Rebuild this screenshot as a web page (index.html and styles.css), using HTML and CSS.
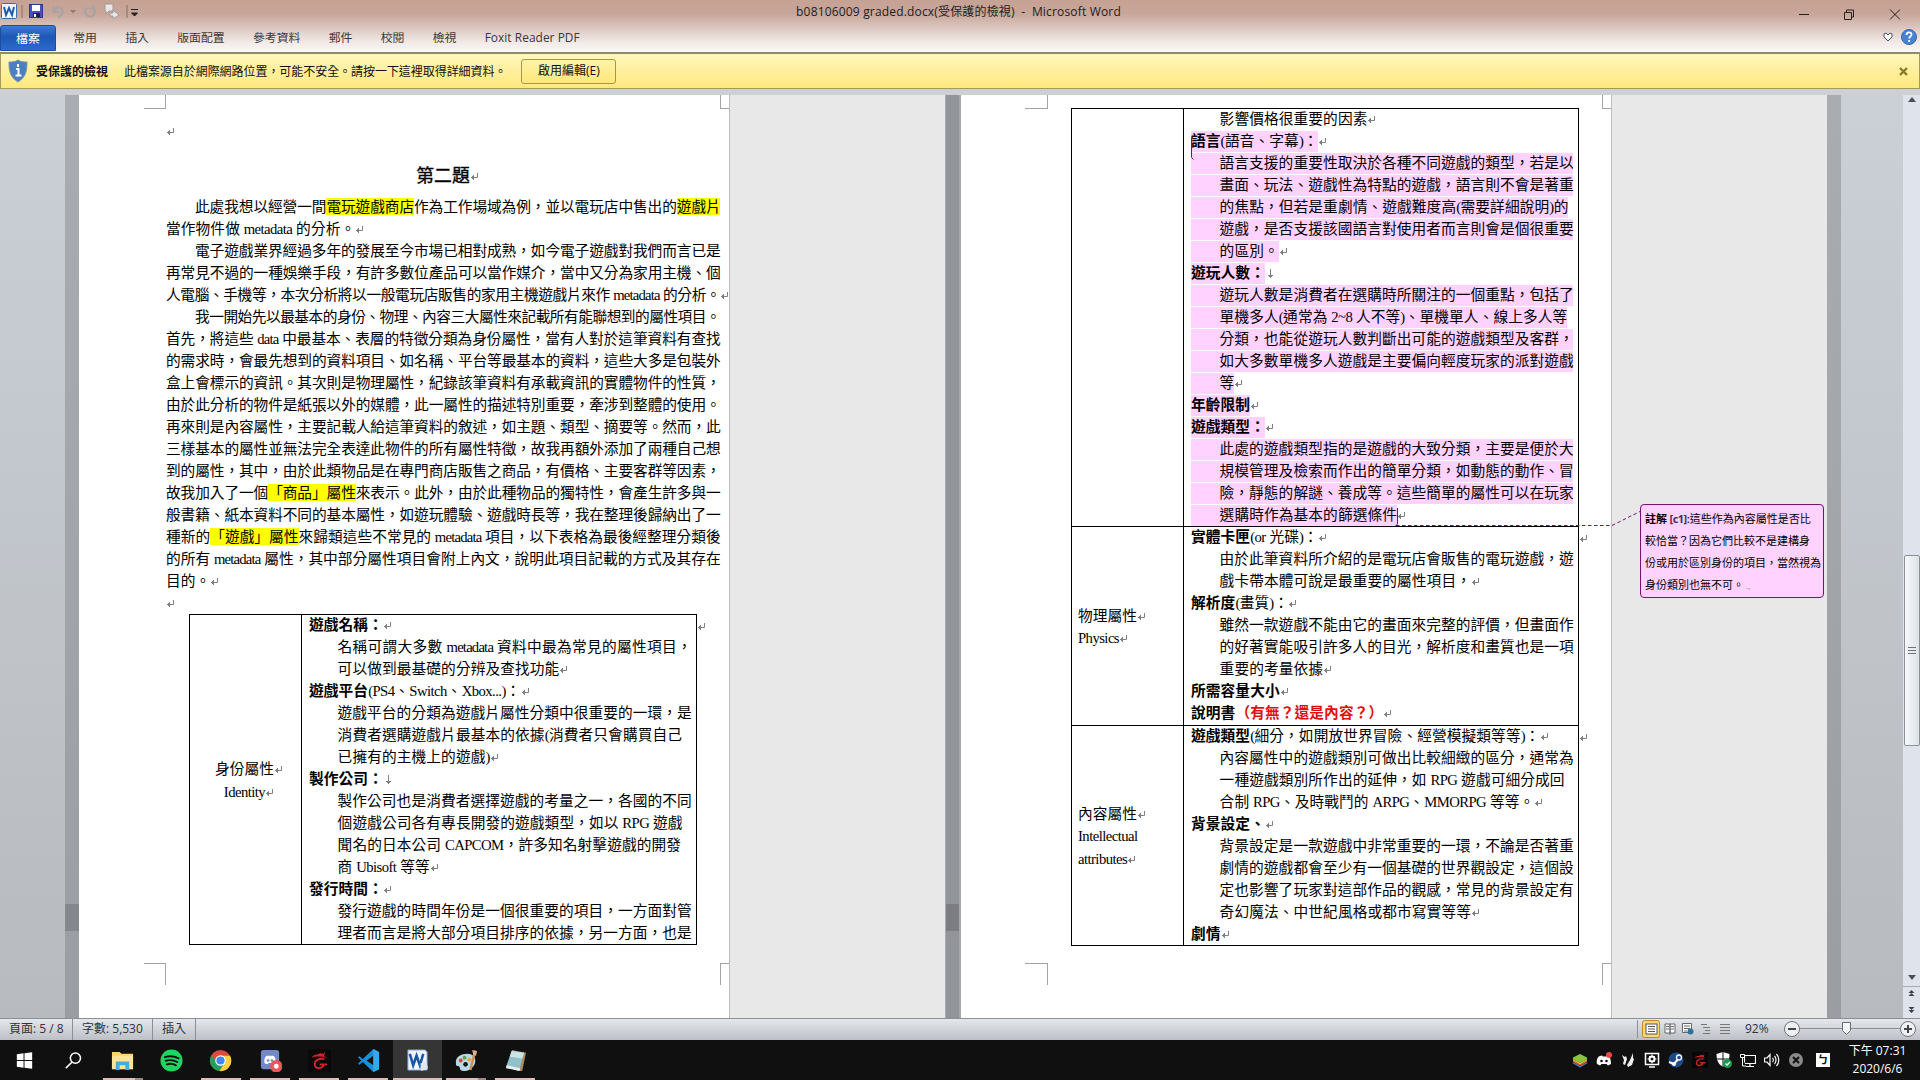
FILE: index.html
```html
<!DOCTYPE html>
<html lang="zh-Hant">
<head>
<meta charset="utf-8">
<title>b08106009 graded.docx - Microsoft Word</title>
<link rel="stylesheet" href="styles.css">
</head>
<body>
<header class="chrome">
  <div class="titlebar">
    <svg class="quick" width="145" height="25" viewBox="0 0 145 25">
      <rect x="1.500" y="3.500" width="15" height="15" rx="1" fill="#f4f8fd" stroke="#3b6dab"/>
      <path d="M4 7l2 8 3-7 3 7 2-8" fill="none" stroke="#1c5db0" stroke-width="2"/>
      <path d="M22 5v13M127 5v13" stroke="#857069"/>
      <rect x="29.500" y="4.500" width="13" height="13" fill="#4a4fc0" stroke="#33378c"/>
      <rect x="32" y="5" width="8" height="6" fill="#fff"/><rect x="33" y="13" width="7" height="4" fill="#20204a"/><rect x="34" y="14" width="2" height="3" fill="#fff"/>
      <path d="M53.500 6v6h6M54 11c3-6 11-3 8 3l-4 4" fill="none" stroke="#a8a3a3" stroke-width="2.200"/>
      <path d="M70 10h6l-3 3.500z" fill="#8d7d77"/>
      <path d="M87 7.500a5 5 0 1 0 6 0M93.500 4v4.500H89" fill="none" stroke="#a8a3a3" stroke-width="2.200"/>
      <path d="M105 4h8v7h-4l-3 3v-3h-1zM110 13h3v-3l6 5-6 4v-3h-3z" fill="#e9e6e6" stroke="#a19a9a"/>
      <path d="M131 9.500h7M131.500 13h6l-3 3z" stroke="#222" fill="#222"/>
    </svg>
    <div class="caption">b08106009 graded.docx(受保護的檢視)&nbsp; -&nbsp; Microsoft Word</div>
    <svg class="winbtns" width="145" height="25" viewBox="0 0 145 25" fill="none" stroke="#2a2020">
      <path d="M24 14.500h10"/><path d="M69.500 12.500h7v7h-7zM71.500 12v-2h7v7h-2"/><path d="M115 9.500l10 10M125 9.500l-10 10"/>
    </svg>
  </div>
  <nav class="tabs">
    <span class="file">檔案</span><span>常用</span><span>插入</span><span>版面配置</span><span>參考資料</span><span>郵件</span><span>校閱</span><span>檢視</span><span class="foxit">Foxit Reader PDF</span>
    <svg class="help" width="40" height="24" viewBox="0 0 40 24">
      <path d="M4 9l2-1 2 2 2-2 2 1v3l-4 4-4-4z" fill="#fff" stroke="#4b4f60"/>
      <circle cx="29" cy="12" r="7.500" fill="#4683d2" stroke="#3465ad"/>
      <path d="M26.500 10c0-3.500 5-3.500 5-.5 0 2-2.300 2-2.300 4M29.200 15v2" fill="none" stroke="#fff" stroke-width="1.800"/>
    </svg>
  </nav>
  <div class="notice">
    <svg width="20" height="24" viewBox="0 0 20 24"><path d="M10 1c3 2 6 2 9 2 0 9-1 15-9 20C2 18 1 12 1 3c3 0 6 0 9-2z" fill="#4a7fc0" stroke="#7d93a8"/><path d="M10 5v3M8 10h2.500v6M7.500 16.500h6" stroke="#fff" stroke-width="2" fill="none"/></svg>
    <strong>受保護的檢視</strong>
    <span class="msg">此檔案源自於網際網路位置，可能不安全。請按一下這裡取得詳細資料。</span>
    <button class="enable">啟用編輯(E)</button>
    <svg class="close" width="9" height="9" viewBox="0 0 9 9"><path d="M1 1l7 7M8 1l-7 7" stroke="#8d7a25" stroke-width="2.400"/></svg>
  </div>
</header>

<main class="workspace">
  <div class="shade left"><span class="notch"></span></div>
  <section class="page one">
    <div class="crops top"><span class="cl"></span><span class="cr"></span></div>
    <div class="body doc">
      <div class="l r blank"></div>
      <div class="l r heading"><span>第二題</span></div>
      <div class="l f d"><span>此處我想以經營一間<mark>電玩遊戲商店</mark>作為工作場域為例，並以電玩店中售出的<mark>遊戲片</mark></span></div>
      <div class="l r"><span>當作物件做 <i>metadata</i> 的分析。</span></div>
      <div class="l f d"><span>電子遊戲業界經過多年的發展至今市場已相對成熟，如今電子遊戲對我們而言已是</span></div>
      <div class="l f"><span>再常見不過的一種娛樂手段，有許多數位產品可以當作媒介，當中又分為家用主機、個</span></div>
      <div class="l f r"><span>人電腦、手機等，本次分析將以一般電玩店販售的家用主機遊戲片來作 <i>metadata</i> 的分析。</span></div>
      <div class="l f d"><span>我一開始先以最基本的身份、物理、內容三大屬性來記載所有能聯想到的屬性項目。</span></div>
      <div class="l f"><span>首先，將這些 <i>data</i> 中最基本、表層的特徵分類為身份屬性，當有人對於這筆資料有查找</span></div>
      <div class="l f"><span>的需求時，會最先想到的資料項目、如名稱、平台等最基本的資料，這些大多是包裝外</span></div>
      <div class="l f"><span>盒上會標示的資訊。其次則是物理屬性，紀錄該筆資料有承載資訊的實體物件的性質，</span></div>
      <div class="l f"><span>由於此分析的物件是紙張以外的媒體，此一屬性的描述特別重要，牽涉到整體的使用。</span></div>
      <div class="l f"><span>再來則是內容屬性，主要記載人給這筆資料的敘述，如主題、類型、摘要等。然而，此</span></div>
      <div class="l f"><span>三樣基本的屬性並無法完全表達此物件的所有屬性特徵，故我再額外添加了兩種自己想</span></div>
      <div class="l f"><span>到的屬性，其中，由於此類物品是在專門商店販售之商品，有價格、主要客群等因素，</span></div>
      <div class="l f"><span>故我加入了一個<mark>「商品」屬性</mark>來表示。此外，由於此種物品的獨特性，會產生許多與一</span></div>
      <div class="l f"><span>般書籍、紙本資料不同的基本屬性，如遊玩體驗、遊戲時長等，我在整理後歸納出了一</span></div>
      <div class="l f"><span>種新的<mark>「遊戲」屬性</mark>來歸類這些不常見的 <i>metadata</i> 項目，以下表格為最後經整理分類後</span></div>
      <div class="l f"><span>的所有 <i>metadata</i> 屬性，其中部分屬性項目會附上內文，說明此項目記載的方式及其存在</span></div>
      <div class="l r"><span>目的。</span></div>
      <div class="l r"></div>
    </div>
    <div class="table doc">
      <div class="row h1">
        <div class="key mid"><div class="l r"><span>身份屬性</span></div><div class="l r"><span><i>Identity</i></span></div></div>
        <div class="val">
          <div class="l r"><span><b>遊戲名稱：</b></span></div>
          <div class="l f n"><span>名稱可謂大多數 <i>metadata</i> 資料中最為常見的屬性項目，</span></div>
          <div class="l r n"><span>可以做到最基礎的分辨及查找功能</span></div>
          <div class="l r"><span><b>遊戲平台</b><i>(PS4</i>、<i>Switch</i>、<i>Xbox...)</i>：</span></div>
          <div class="l f n"><span>遊戲平台的分類為遊戲片屬性分類中很重要的一環，是</span></div>
          <div class="l n"><span>消費者選購遊戲片最基本的依據<i>(</i>消費者只會購買自己</span></div>
          <div class="l r n"><span>已擁有的主機上的遊戲<i>)</i></span></div>
          <div class="l dn"><span><b>製作公司：</b></span></div>
          <div class="l f n"><span>製作公司也是消費者選擇遊戲的考量之一，各國的不同</span></div>
          <div class="l n"><span>個遊戲公司各有專長開發的遊戲類型，如以 <i>RPG</i> 遊戲</span></div>
          <div class="l n"><span>聞名的日本公司 <i>CAPCOM</i>，許多知名射擊遊戲的開發</span></div>
          <div class="l r n"><span>商 <i>Ubisoft</i> 等等</span></div>
          <div class="l r"><span><b>發行時間：</b></span></div>
          <div class="l f n"><span>發行遊戲的時間年份是一個很重要的項目，一方面對管</span></div>
          <div class="l f n"><span>理者而言是將大部分項目排序的依據，另一方面，也是</span></div>
        </div>
        <div class="rowend l r"></div>
      </div>
    </div>
    <div class="crops bottom"><span class="cl"></span><span class="cr"></span></div>
  </section>
  <aside class="markup"></aside>
  <div class="gutter"><span class="notch"></span></div>
  <section class="page two">
    <div class="crops top"><span class="cl"></span><span class="cr"></span></div>
    <div class="table doc">
      <div class="row h2">
        <div class="key"></div>
        <div class="val">
          <div class="l r n"><span>影響價格很重要的因素</span></div>
          <div class="l r p"><span><b>語言</b><i>(</i>語音、字幕<i>)</i>：</span></div>
          <div class="l f n p"><span>語言支援的重要性取決於各種不同遊戲的類型，若是以</span></div>
          <div class="l f n p"><span>畫面、玩法、遊戲性為特點的遊戲，語言則不會是著重</span></div>
          <div class="l n p"><span>的焦點，但若是重劇情、遊戲難度高<i>(</i>需要詳細說明<i>)</i>的</span></div>
          <div class="l f n p"><span>遊戲，是否支援該國語言對使用者而言則會是個很重要</span></div>
          <div class="l r n p"><span>的區別。</span></div>
          <div class="l dn p"><span><b>遊玩人數：</b></span></div>
          <div class="l f n p"><span>遊玩人數是消費者在選購時所關注的一個重點，包括了</span></div>
          <div class="l n p"><span>單機多人<i>(</i>通常為 <i>2~8</i> 人不等<i>)</i>、單機單人、線上多人等</span></div>
          <div class="l f n p"><span>分類，也能從遊玩人數判斷出可能的遊戲類型及客群，</span></div>
          <div class="l f n p"><span>如大多數單機多人遊戲是主要偏向輕度玩家的派對遊戲</span></div>
          <div class="l r n p"><span>等</span></div>
          <div class="l r p"><span><b>年齡限制</b></span></div>
          <div class="l r p"><span><b>遊戲類型：</b></span></div>
          <div class="l f n p"><span>此處的遊戲類型指的是遊戲的大致分類，主要是便於大</span></div>
          <div class="l f n p"><span>規模管理及檢索而作出的簡單分類，如動態的動作、冒</span></div>
          <div class="l f n p"><span>險，靜態的解謎、養成等。這些簡單的屬性可以在玩家</span></div>
          <div class="l r n p"><span>選購時作為基本的篩選條件</span></div>
        </div>
      </div>
      <div class="row h3">
        <div class="key"><div class="l r"><span>物理屬性</span></div><div class="l r"><span><i>Physics</i></span></div></div>
        <div class="val">
          <div class="l r"><span><b>實體卡匣</b><i>(or</i> 光碟<i>)</i>：</span></div>
          <div class="l f n"><span>由於此筆資料所介紹的是電玩店會販售的電玩遊戲，遊</span></div>
          <div class="l r n"><span>戲卡帶本體可說是最重要的屬性項目，</span></div>
          <div class="l r"><span><b>解析度</b><i>(</i>畫質<i>)</i>：</span></div>
          <div class="l f n"><span>雖然一款遊戲不能由它的畫面來完整的評價，但畫面作</span></div>
          <div class="l f n"><span>的好著實能吸引許多人的目光，解析度和畫質也是一項</span></div>
          <div class="l r n"><span>重要的考量依據</span></div>
          <div class="l r"><span><b>所需容量大小</b></span></div>
          <div class="l r"><span><b>說明書<em>（有無？還是內容？）</em></b></span></div>
        </div>
        <div class="rowend l r"></div>
      </div>
      <div class="row h4">
        <div class="key"><div class="l r"><span>內容屬性</span></div><div class="l"><span><i>Intellectual</i></span></div><div class="l r"><span><i>attributes</i></span></div></div>
        <div class="val">
          <div class="l r"><span><b>遊戲類型</b><i>(</i>細分，如開放世界冒險、經營模擬類等等<i>)</i>：</span></div>
          <div class="l f n"><span>內容屬性中的遊戲類別可做出比較細緻的區分，通常為</span></div>
          <div class="l n"><span>一種遊戲類別所作出的延伸，如 <i>RPG</i> 遊戲可細分成回</span></div>
          <div class="l r n"><span>合制 <i>RPG</i>、及時戰鬥的 <i>ARPG</i>、<i>MMORPG</i> 等等。</span></div>
          <div class="l r"><span><b>背景設定、</b></span></div>
          <div class="l f n"><span>背景設定是一款遊戲中非常重要的一環，不論是否著重</span></div>
          <div class="l f n"><span>劇情的遊戲都會至少有一個基礎的世界觀設定，這個設</span></div>
          <div class="l f n"><span>定也影響了玩家對這部作品的觀感，常見的背景設定有</span></div>
          <div class="l r n"><span>奇幻魔法、中世紀風格或都市寫實等等</span></div>
          <div class="l r"><span><b>劇情</b></span></div>
        </div>
        <div class="rowend l r"></div>
      </div>
    </div>
    <div class="crops bottom"><span class="cl"></span><span class="cr"></span></div>
    <svg class="bracket" width="6" height="30" viewBox="0 0 6 30" fill="none" stroke="#7a1076">
      <path d="M3 2.500H1.500v20l2 2"/>
    </svg>
    <svg class="leader" width="250" height="32" viewBox="0 0 250 32" fill="none" stroke="#7a1076">
      <path d="M2.500 3v16l-2 2"/><path d="M1 20.500h216l28-14" stroke-dasharray="3.500 2.500"/>
    </svg>
  </section>
  <aside class="markup second">
    <div class="balloon"><strong>註解 <span class="tag">[c1]</span></strong>:這些作為內容屬性是否比<br>較恰當？因為它們比較不是建構身<br>份或用於區別身份的項目，當然視為<br>身份類別也無不可。<small> .,</small></div>
  </aside>
  <div class="shade right"></div>
  <div class="space"></div>
  <div class="scroll">
    <span class="arrow up"></span><span class="grow1"></span><span class="thumb"></span><span class="grow2"></span><span class="arrow"></span>
    <svg width="17" height="32" viewBox="0 0 17 32" fill="#3d4148"><path d="M0 .5h17" stroke="#a8adb5"/><path d="M8.500 4l3 3h-6zM8.500 7l3 3h-6zM5.500 21h6l-3 3zM5.500 24h6l-3 3z"/></svg>
  </div>
</main>

<footer class="status">
  <span class="s1">頁面: 5 / 8</span><span class="s2">字數: 5,530</span><span class="s3">插入</span>
  <div class="views">
    <svg width="100" height="20" viewBox="0 0 100 20">
      <path d="M1.500 1v18" stroke="#8b9098"/>
      <rect x="6.500" y="1.500" width="17" height="17" rx="2" fill="#fcd873" stroke="#c0882c"/>
      <rect x="10" y="5" width="11" height="10" fill="#fff" stroke="#555"/><path d="M12 7.500h7M12 10h7M12 12.500h7" stroke="#555"/>
      <path d="M29 5h5v9h-5zM34 5h5v9h-5zM30 7.500h3M30 10h3M35 7.500h3M35 10h3M34 14v2" fill="#fff" stroke="#666"/>
      <path d="M46.500 4.500h9v9h-9z" fill="#fff" stroke="#666"/><path d="M48 7h6M48 9.500h6M48 12h3" stroke="#666"/><circle cx="54.500" cy="12.500" r="3" fill="#2f7295"/>
      <path d="M65 5.500h6M67 8.500h7M69 11.500h5M67 14.500h7M84 5.500h10M84 8.500h10M84 11.500h10M84 14.500h10" stroke="#777"/>
    </svg>
    <span class="pct">92%</span>
    <svg class="zoomer" width="140" height="20" viewBox="0 0 140 20">
      <path d="M19 9.500h104" stroke="#8b9098"/>
      <circle cx="12" cy="10" r="7.500" fill="#eef0f3" stroke="#70757d"/><circle cx="128" cy="10" r="7.500" fill="#eef0f3" stroke="#70757d"/>
      <path d="M8 10h8M124 10h8M128 6v8" stroke="#444" stroke-width="2"/>
      <path d="M62.500 3.500h8v8l-4 4-4-4z" fill="#f5f6f8" stroke="#666b73"/>
    </svg>
  </div>
</footer>

<footer class="taskbar">
  <div class="apps">
    <div class="app plain"><svg viewBox="0 0 24 24"><path fill="#fff" d="M4 5.500l7-1v7H4zM12 4.400L20 3.300v8.200h-8zM4 12.500h7v7l-7-1zM12 12.500h8v8.200l-8-1.100z"/></svg></div>
    <div class="app plain"><svg viewBox="0 0 24 24"><g fill="none" stroke="#fff" stroke-width="1.600"><circle cx="14" cy="9.500" r="5.300"/><path d="M10.500 13.500L4 20"/></g></svg></div>
    <div class="app split"><svg viewBox="0 0 24 24"><path d="M1 3h8l2 2h12v16H1z" fill="#fbd56b"/><path d="M1 7h22v14H1z" fill="#ffe594"/><path d="M5 22v-9h14v9h-4v-5H9v5z" fill="#43aedb"/></svg></div>
    <div class="app plain"><svg viewBox="0 0 24 24"><circle cx="12" cy="12" r="11.500" fill="#1ed65f"/><path d="M5 8.500c5-1.500 10-1 14.500 1.300M6 12.300c4-1.200 8.500-.7 12 1.300M7 16c3.500-1 7-.5 9.700 1" fill="none" stroke="#111" stroke-width="2" stroke-linecap="round"/></svg></div>
    <div class="app"><svg viewBox="0 0 24 24"><circle cx="12" cy="12" r="11" fill="#e04a3c"/><path d="M2.500 6.500A11 11 0 0 0 11 23l5-9-8 0z" fill="#25a05a"/><path d="M12 7h10a11 11 0 0 1-11 16l5.500-9z" fill="#fbd043"/><circle cx="12" cy="12" r="5.500" fill="#fff"/><circle cx="12" cy="12" r="4.300" fill="#4286f0"/></svg></div>
    <div class="app"><svg viewBox="0 0 24 24"><rect x="2" y="1" width="19" height="20" rx="3" fill="#7289c8"/><path d="M6 15c-1-3 0-7 2-8h7c2 1 3 5 2 8l-3 1-1-1.500h-3L9 16z" fill="#fff"/><circle cx="9.500" cy="12" r="1.400" fill="#7289c8"/><circle cx="13.500" cy="12" r="1.400" fill="#7289c8"/><circle cx="18" cy="18" r="6.500" fill="#e9565b"/><circle cx="18" cy="18" r="2.500" fill="#fff"/></svg></div>
    <div class="app"><svg viewBox="0 0 24 24"><path d="M0 0h24v24H0z" fill="#090909"/><path d="M4 9c2-4 6-2 9-5 0 1.500 3 1.500 5-1-.5 2.500-1.500 3-1 4.500l4 2C16 8 8 7 4 9z" fill="#d3222a"/><path d="M17 10.500c-5-1-10 1-10 5.500 0 5 8 5.500 9.500 0H20M12 16h5" fill="none" stroke="#d3222a" stroke-width="2"/></svg></div>
    <div class="app"><svg viewBox="0 0 24 24"><path d="M17 0l6 3v18l-6 3L6 13.500 2.500 16.500 1 15.500 4.500 12 1 8.500l1.500-1L6 10.500zM17 7l-7 5 7 5z" fill="#1b8ed8"/><path d="M17 0l6 3v18l-6 3z" fill="#35a8f0"/></svg></div>
    <div class="app active"><svg viewBox="0 0 24 24"><path d="M2 1h18l2 2v19H2z" fill="#f0f5fb" stroke="#7fa3d3"/><path d="M4 5l3.500 12L11 7l3.500 10L18 5" fill="none" stroke="#1a57a8" stroke-width="2.700"/><path d="M15 15l6-2 2 7-7 3z" fill="#dfe8f2"/></svg></div>
    <div class="app split"><svg viewBox="0 0 24 24"><path d="M1 15C0 8 7 5 13 5s9 4 8 9-6 9-12 9c-5 0-3-4-5-5s-3 0-3-3z" fill="#b7d8e8"/><circle cx="6" cy="12" r="2" fill="#d04b33"/><circle cx="10" cy="9" r="2" fill="#5fa83f"/><circle cx="15" cy="11" r="2" fill="#e4a632"/><circle cx="11" cy="16" r="2.400" fill="#151515"/><path d="M21 2l-5 20" stroke="#cf8e49" stroke-width="2.500"/><path d="M18 1l5 1-1 5-3-1z" fill="#dbb38a"/></svg></div>
    <div class="app"><svg viewBox="0 0 24 24"><path d="M8 1l15 3-4 19-5 0z" fill="#a98b5b"/><path d="M8 2l13 2-5 18L2 19z" fill="#8fc1c9"/><path d="M8 2l13 2-2 6L6 8z" fill="#c9e3e6"/><path d="M3 17l14 3-1 3-14-3z" fill="#e8eeee"/></svg></div>
  </div>
  <div class="tray">
    <svg viewBox="0 0 16 16"><path d="M1 10l7 4 7-4v1.500L8 15.500 1 11.500z" fill="#3b7ed0"/><path d="M1 8.500l7 4 7-4V10l-7 4-7-4z" fill="#e24b32"/><path d="M1 7l7 4 7-4v1.500l-7 4-7-4z" fill="#f3cf35"/><path d="M1 5.500L8 2l7 3.500V7l-7 4-7-4z" fill="#8bc53f"/></svg>
    <svg viewBox="0 0 16 16"><path d="M1 12C0 8 2 4 4 4l2-.5 1 1h3l1-1c3 .500 4 4 4 8.500l-3 1.500-1.500-1.500h-5L4 13.500z" fill="#fff"/><circle cx="5.500" cy="9" r="1.300" fill="#111"/><circle cx="10.500" cy="9" r="1.300" fill="#111"/><circle cx="13" cy="3" r="3" fill="#e8484c"/></svg>
    <svg viewBox="0 0 16 16"><path d="M2 3l3 2 1-1 1 3-2 6-2-1 1-4zM13 1v5l1 1-2 6-4 2-1-2 3-5z" fill="#eee"/></svg>
    <svg viewBox="0 0 16 16"><path d="M1.500 1.500h13v11h-13zM5 15h6" fill="none" stroke="#fff" stroke-width="1.500"/><circle cx="8" cy="7" r="2.500" fill="none" stroke="#fff" stroke-width="2"/><path d="M8 2.500v9M3.500 7h9M5 4l6 6M11 4l-6 6" stroke="#fff"/><circle cx="8" cy="7" r="1.300" fill="#111"/></svg>
    <svg viewBox="0 0 16 16"><circle cx="8" cy="8" r="7.500" fill="#1c4a85"/><path d="M1 10l5 2M6 12l5-6" stroke="#fff" stroke-width="2"/><circle cx="11" cy="5.500" r="2.500" fill="#1c4a85" stroke="#fff" stroke-width="1.300"/><circle cx="6" cy="12" r="2" fill="#fff"/></svg>
    <svg viewBox="0 0 16 16"><path d="M0 0h16v16H0z" fill="#070707"/><path d="M3 6c1-3 4-1 6-3.500 0 1 2 1 3.500-.5-.5 1.500-1 2-.5 3l2 1.500C11 5 6 4.500 3 6z" fill="#cb2128"/><path d="M11.500 7c-3.500-.5-7 .7-7 3.700 0 3.500 5.500 3.800 6.500 0h2.500M8 10.700h3.500" fill="none" stroke="#cb2128" stroke-width="1.400"/></svg>
    <svg viewBox="0 0 16 16"><path d="M7 0l6.500 2c0 7-2 10-6.500 13C2.500 12 .5 9 .5 2z" fill="#fff"/><path d="M7 0v15M0 7h14" stroke="#111"/><circle cx="11.500" cy="11.500" r="4.500" fill="#1a9a50"/><path d="M9.500 11.500l1.500 1.500 3-3" fill="none" stroke="#fff" stroke-width="1.300"/></svg>
    <svg viewBox="0 0 16 16"><path d="M4.500 3.500h11v8h-11zM10 12v2.500M6 14.500h8" fill="none" stroke="#fff" stroke-width="1.200"/><path d="M.5 2.500h4v3h-4zM2.500 6v8H6" fill="#111" stroke="#fff"/></svg>
    <svg viewBox="0 0 16 16"><path d="M.5 6h2.500l3-3.500v11L3 10H.5zM8.500 6c1 1 1 3 0 4M10.500 4c2 2 2 6 0 8M12.500 2c3 3 3 9 0 12" fill="none" stroke="#fff" stroke-width="1.200"/></svg>
    <svg viewBox="0 0 16 16"><circle cx="8" cy="8" r="7" fill="#8b8b8b"/><path d="M5 5l6 6M11 5l-6 6" stroke="#111" stroke-width="2"/></svg>
    <span class="ime">ㄅ</span>
    <div class="clock">下午 07:31<br>2020/6/6</div>
  </div>
</footer>
</body>
</html>
```
FILE: styles.css
```css
* { box-sizing: border-box; }
body {
  margin: 0;
  width: 1920px;
  height: 1080px;
  overflow: hidden;
  display: flex;
  flex-direction: column;
  font-family: "Open Sans", "Noto Sans CJK TC", sans-serif;
  font-size: 12px;
  color: #1d1d1d;
}
svg { display: block; flex: none; }

/* window frame */
.chrome {
  height: 95px;
  flex: none;
  background: linear-gradient(#c6a294 0, #c8a69a 14px, #dcc7c0 28px, #f1e9e6 42px, #faf8f7 52px, #cdd1d6 52px);
}
.titlebar { height: 25px; display: flex; justify-content: space-between; }
.caption { font-size: 12px; line-height: 23px; padding-right: 3px; white-space: nowrap; letter-spacing: .17px; }
.tabs { height: 27px; display: flex; gap: 28.200px; line-height: 25px; white-space: nowrap; color: #3c3838; font-size: 11.900px; }
.tabs .file {
  width: 56px;
  margin-right: -11px;
  height: 26px;
  border-radius: 3px 3px 0 0;
  background: linear-gradient(#3d7bd4, #1f57b4 45%, #2a6bcd);
  border: 1px solid #1d4d9f;
  color: #fff;
  text-align: center;
}
.tabs .foxit { letter-spacing: .05px; }
.help { margin: 0 0 0 auto; }
.notice {
  height: 37px;
  display: flex;
  align-items: center;
  padding: 0 11px 0 7px;
  border: 1px solid #a39a5e;
  border-top: 2px solid #8f8c68;
  background: linear-gradient(#fff6bd, #ffe97d);
  color: #111;
  white-space: nowrap;
}
.notice strong { margin-left: 8px; width: 88px; }
.notice .msg { letter-spacing: -.05px; }
.enable {
  margin-left: 15px;
  width: 95px;
  height: 25px;
  padding: 0 0 2px;
  border: 1px solid #a8964c;
  border-radius: 3px;
  background: linear-gradient(#fff3a6, #ffe77b);
  font: inherit;
  color: #111;
}
.close { margin-left: auto; }

/* document area */
.workspace { height: 924px; flex: none; display: flex; background: linear-gradient(#cbd0d6, #b7bbc0); border-bottom: 1px solid #8b9096; }
.shade { width: 14px; background: linear-gradient(#a9adb2, #9a9ea2); }
.shade.left { margin-left: 65px; }
.notch { display: block; height: 27px; margin-top: 809px; background: #7b7d82; }
.shade .notch { background: #84878b; }
.page { width: 651px; background: #fff; border-right: 1px solid #bdbdbd; flex: none; position: relative; padding-left: 87px; }
.page.two { padding-left: 86px; }
.markup { width: 215px; background: #e8e8e8; flex: none; }
.markup.second { position: relative; }
.gutter { width: 16px; background: #919599; border-left: 1px solid #a9acae; border-right: 2px solid #a5a8ab; flex: none; }
.space { flex: 1; }

.crops { display: flex; justify-content: space-between; margin-left: -22px; }
.crops.top { height: 14px; }
.crops.bottom { height: 22px; margin-top: 18px; }
.cl { width: 22px; border: 0 solid #a3a3a3; border-right-width: 1px; }
.cr { width: 9px; border: 0 solid #a3a3a3; border-left-width: 1px; }
.two .cl { width: 23px; }
.top .cl, .top .cr { border-bottom-width: 1px; }
.bottom .cl, .bottom .cr { border-top-width: 1px; }

/* text lines */
.doc { font: 400 14.700px/22px "Liberation Serif", "Noto Sans CJK TC", serif; color: #000; letter-spacing: .1px; }
.doc i { font-style: normal; letter-spacing: -.55px; }
.doc b { font-weight: 700; }
.doc em { font-style: normal; color: #e01010; }
.doc mark { background: #ff0; color: inherit; padding: 1px 0 0; }
.body { width: 554px; }
.l { display: flex; height: 22px; white-space: nowrap; }
.l > span { height: 21px; line-height: 21px; flex: none; }
.f > span { width: 100%; text-align-last: justify; letter-spacing: -.7px; }
.f i { letter-spacing: -.8px; }
.d { padding-left: 29px; }
.n > span { padding-left: 28.600px; }
.p > span { background: #ffd2ff; }
.r::after, .dn::after {
  content: "";
  width: 8px;
  height: 9px;
  margin: 6px 0 0;
  flex: none;
  background: url('data:image/svg+xml,<svg xmlns="http://www.w3.org/2000/svg" width="8" height="9" fill="none" stroke="gray"><path d="M7.500 1v4.500H1M3.500 3v5M2.500 4v3"/></svg>') no-repeat;
}
.dn::after {
  margin-left: 2px;
  background-image: url('data:image/svg+xml,<svg xmlns="http://www.w3.org/2000/svg" width="8" height="9" fill="none" stroke="gray"><path d="M3.500 0v9M1 6.500h5M2 7.500h3"/></svg>');
}
.blank { margin: 12px 0 23px; }
.heading { justify-content: center; font-size: 17.800px; -webkit-text-stroke: .35px #000; padding-left: 8px; margin-bottom: 9px; }

/* tables */
.table { width: 508px; border: 1px solid #000; border-width: 1px 1px 0; }
.one .table { margin: -1px 0 0 23px; }
.two .table { margin: -1px 0 0 24px; }
.row { display: flex; border-bottom: 1px solid #000; position: relative; }
.h1 { height: 330px; }
.h2 { height: 418px; }
.h3 { height: 199px; }
.h4 { height: 220px; }
.key { width: 112px; border-right: 1px solid #000; display: flex; flex-direction: column; justify-content: center; padding: 4px 0 0 6px; }
.key.mid { align-items: center; }
.key .l { height: 22.500px; }
.val { width: 394px; padding: 0 5px 0 7px; }
.rowend { position: absolute; left: 507px; top: 1px; }
.two .crops.bottom { margin-top: 17px; }

/* comment */
.bracket { position: absolute; left: 229px; top: 40px; }
.leader { position: absolute; left: 434px; top: 410px; z-index: 2; }
.balloon {
  margin: 409px 0 0 28px;
  width: 184px;
  height: 94px;
  border: 1px solid #7a1076;
  border-radius: 4px;
  background: #ffd2ff;
  padding: 2px 0 0 4px;
  font: 400 11px/22px "Noto Sans CJK TC", sans-serif;
  color: #000;
  white-space: nowrap;
}
.tag { font-family: "Open Sans", sans-serif; color: #403060; font-size: 11px; line-height: 12px; letter-spacing: -.5px; }
.balloon small { color: #999; font-size: 8px; line-height: 10px; }

/* scrollbar */
.scroll { width: 17px; background: #dfe4ec; display: flex; flex-direction: column; align-items: center; }
.arrow { border: 4px solid transparent; border-top: 5px solid #4a4e55; border-bottom: 0; margin: 3px 0 6px; }
.arrow.up { border-top: 0; border-bottom: 5px solid #4a4e55; margin: 2px 0; }
.grow1 { height: 451px; }
.thumb {
  width: 16px;
  height: 191px;
  border: 1px solid #8a8f99;
  border-radius: 2px;
  background:
    repeating-linear-gradient(#6d727b 0 1px, transparent 1px 3px) 50% 50% / 8px 7px no-repeat,
    linear-gradient(90deg, #f7f9fb, #dde2e9);
}
.grow2 { flex: 1; }

/* status bar */
.status { height: 21px; flex: none; display: flex; background: linear-gradient(#e4e8ec, #bcc0c6); line-height: 20px; color: #2f3338; }
.status > span { border-right: 1px solid #8b9098; white-space: nowrap; padding-left: 9px; }
.s1 { width: 73px; }
.s2 { width: 80px; }
.s3 { width: 43px; }
.views { margin-left: auto; display: flex; width: 284px; }
.pct { width: 40px; padding-left: 9px; }
.zoomer { margin-left: 4px; }

/* taskbar */
.taskbar { height: 40px; flex: none; background: #101010; display: flex; justify-content: space-between; color: #fff; }
.apps { display: flex; }
.app { width: 49.100px; height: 40px; display: flex; align-items: center; justify-content: center; background: linear-gradient(#dcc0b8, #dcc0b8) 50% 38px / 40px 2px no-repeat; }
.app svg { width: 23px; height: 23px; }
.app.plain { background: none; }
.app.active { background: linear-gradient(#dcc0b8, #dcc0b8) 0 38px / 49px 2px no-repeat, #353535; }
.app.split { background-image: linear-gradient(90deg, #dcc0b8 32px, #9c8a84 32px); }
.tray { display: flex; align-items: center; padding-right: 11px; }
.tray svg { width: 16px; height: 16px; margin-right: 8px; }
.ime { width: 14px; height: 14px; margin: 0 16px 0 4px; background: #fff; color: #111; font: 700 11px/13px "Noto Sans CJK TC", sans-serif; text-align: center; }
.clock { width: 63px; text-align: center; line-height: 18px; white-space: nowrap; }
```
